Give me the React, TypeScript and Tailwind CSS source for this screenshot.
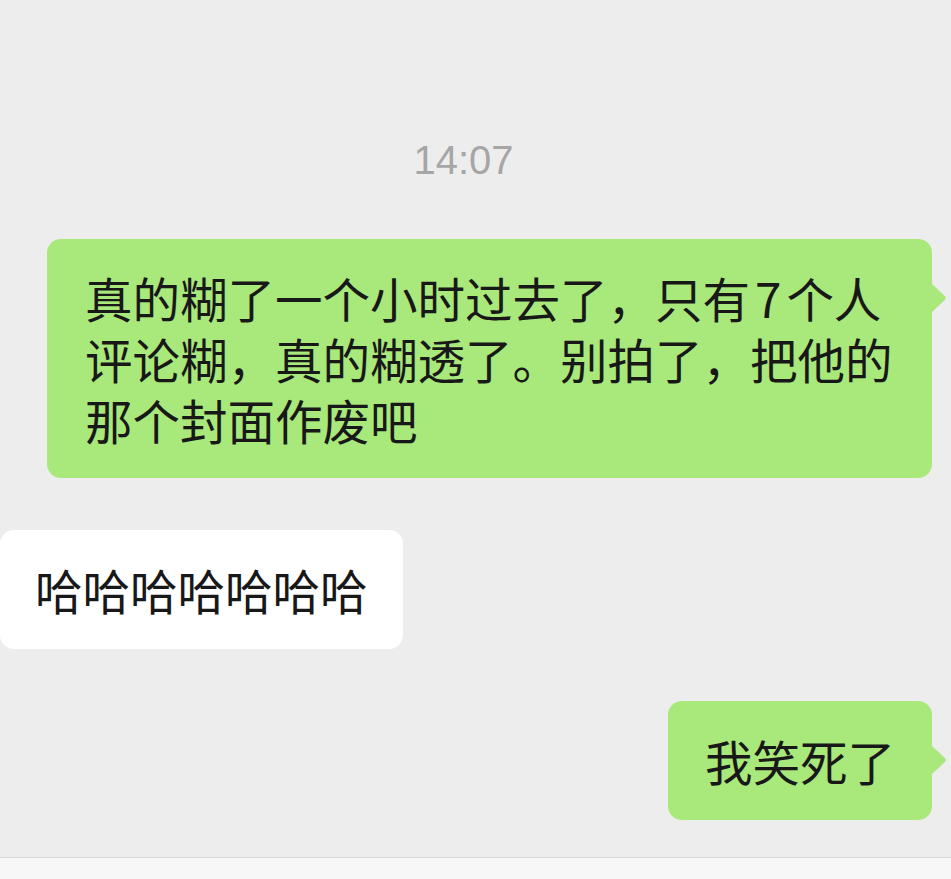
const GREEN = "#a9e87a";

const Tail = () => (
	<svg
		className="absolute -right-[15px] top-[44px]"
		width="16"
		height="30"
		viewBox="0 0 16 30"
	>
		<path d="M0 0 L13.5 12.8 Q16 15 13.5 17.2 L0 30 Z" fill={GREEN} />
	</svg>
);

const App = () => {
	return (
		<div className="w-[951px] min-h-[879px] bg-[#ededed] flex flex-col font-['Noto_Sans_CJK_SC','Noto_Sans',sans-serif] text-[#181818] overflow-hidden">
			<div className="flex-1 flex flex-col pr-[19px]">
				<div className="pt-[134px] text-center text-[40px] leading-[52px] text-[#a6a6a6] font-['Liberation_Sans',sans-serif] pr-[5px]">
					14:07
				</div>

				{/* long message, sent */}
				<div className="mt-[53px] ml-[47px] relative">
					<div className="bg-[#a9e87a] rounded-[14px] px-[38px] py-[28px] text-[47.5px] leading-[61px] whitespace-nowrap">
						真的糊了一个小时过去了，只有<span className="px-[5px]">7</span>个人
						<br />
						评论糊，真的糊透了。别拍了，把他的
						<br />
						那个封面作废吧
					</div>
					<Tail />
				</div>

				{/* received */}
				<div className="mt-[52px] flex">
					<div className="bg-white rounded-[14px] px-[35px] py-[29px] text-[47.5px] leading-[61px]">
						哈哈哈哈哈哈哈
					</div>
				</div>

				{/* short message, sent */}
				<div className="mt-[52px] flex justify-end">
					<div className="relative">
						<div className="bg-[#a9e87a] rounded-[14px] px-[37px] py-[29px] text-[47.5px] leading-[61px]">
							我笑死了
						</div>
						<Tail />
					</div>
				</div>
			</div>

			<div className="h-[22px] bg-[#f7f7f7] border-t border-[#dadada]" />
		</div>
	);
};

export default App;
